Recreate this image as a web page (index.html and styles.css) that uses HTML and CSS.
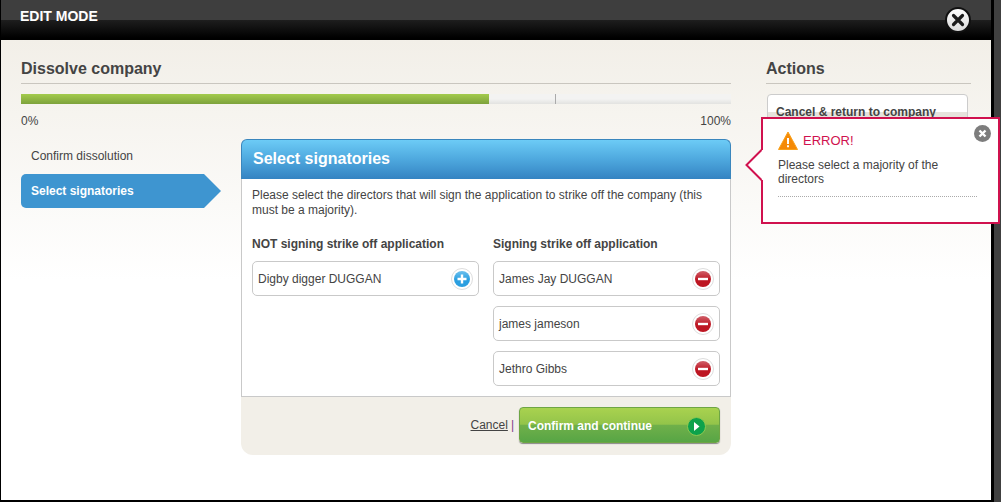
FILE: index.html
```html
<!DOCTYPE html>
<html lang="en">
<head>
    <meta charset="UTF-8">
    <meta name="viewport" content="width=device-width, initial-scale=1.0">
    <title>Dissolve company</title>
    <link rel="stylesheet" href="styles.css">
</head>
<body>
    <div class="modal">
        <div class="modal-bar">EDIT MODE</div>
        <div class="modal-body">
            <div class="main">
                <h2 class="section-title">Dissolve company</h2>
                <div class="progress">
                    <div class="progress-fill"></div>
                    <div class="progress-tick"></div>
                </div>
                <div class="progress-labels"><span>0%</span><span>100%</span></div>
                <div class="wizard">
                    <ul class="steps">
                        <li class="step">Confirm dissolution</li>
                        <li class="step step-active">Select signatories
                            <svg class="step-arrow" width="18" height="34" viewBox="0 0 18 34"><path d="M0 0H1L18 17 1 34H0Z" fill="#3e95d0"/></svg>
                        </li>
                    </ul>
                    <div class="panel">
                        <div class="panel-head">Select signatories</div>
                        <div class="panel-body">
                            <p class="intro">Please select the directors that will sign the application to strike off the company (this must be a majority).</p>
                            <div class="columns">
                                <div class="column">
                                    <h3 class="column-title">NOT signing strike off application</h3>
                                    <div class="person">Digby digger DUGGAN
                                        <svg class="round-icon" width="22" height="22" viewBox="0 0 22 22">
                                            <defs>
                                                <linearGradient id="blue-ball" x1="0" y1="0" x2="0" y2="1"><stop offset="0" stop-color="#6cc0ee"/><stop offset="0.55" stop-color="#2b9fe0"/></linearGradient>
                                                <linearGradient id="red-ball" x1="0" y1="0" x2="0" y2="1"><stop offset="0" stop-color="#d0606a"/><stop offset="0.55" stop-color="#bd1622"/></linearGradient>
                                            </defs>
                                            <circle cx="11" cy="11" r="10.5" fill="#fff" stroke="#ddd"/><circle cx="11" cy="11" r="8" fill="url(#blue-ball)"/><path d="M11 6.5v9M6.5 11h9" stroke="#fff" stroke-width="2.4"/>
                                        </svg>
                                    </div>
                                </div>
                                <div class="column">
                                    <h3 class="column-title">Signing strike off application</h3>
                                    <div class="person">James Jay DUGGAN
                                        <svg class="round-icon" width="22" height="22" viewBox="0 0 22 22"><circle cx="11" cy="11" r="10.5" fill="#fff" stroke="#ddd"/><circle cx="11" cy="11" r="8" fill="url(#red-ball)"/><path d="M6 11h10" stroke="#fff" stroke-width="2.4"/></svg>
                                    </div>
                                    <div class="person">james jameson
                                        <svg class="round-icon" width="22" height="22" viewBox="0 0 22 22"><circle cx="11" cy="11" r="10.5" fill="#fff" stroke="#ddd"/><circle cx="11" cy="11" r="8" fill="url(#red-ball)"/><path d="M6 11h10" stroke="#fff" stroke-width="2.4"/></svg>
                                    </div>
                                    <div class="person">Jethro Gibbs
                                        <svg class="round-icon" width="22" height="22" viewBox="0 0 22 22"><circle cx="11" cy="11" r="10.5" fill="#fff" stroke="#ddd"/><circle cx="11" cy="11" r="8" fill="url(#red-ball)"/><path d="M6 11h10" stroke="#fff" stroke-width="2.4"/></svg>
                                    </div>
                                </div>
                            </div>
                        </div>
                        <div class="panel-foot">
                            <a class="cancel" href="#">Cancel</a><span class="divider">|</span>
                            <button class="confirm">Confirm and continue
                                <svg width="19" height="19" viewBox="0 0 19 19"><circle cx="9.5" cy="9.5" r="9" fill="#0da24b" stroke="#8cc850"/><path d="M7 5l5.5 4.5L7 14Z" fill="#fff"/></svg>
                            </button>
                        </div>
                    </div>
                </div>
            </div>
            <div class="actions">
                <h2 class="section-title">Actions</h2>
                <div class="action-btn">Cancel &amp; return to company</div>
            </div>
        </div>
    </div>

    <svg class="modal-close" width="26" height="26" viewBox="0 0 26 26">
        <defs><linearGradient id="close-ball" x1="0" y1="0" x2="0" y2="1"><stop offset="0" stop-color="#fff"/><stop offset="1" stop-color="#d8d8d8"/></linearGradient></defs>
        <circle cx="13" cy="13" r="12" fill="url(#close-ball)" stroke="#111" stroke-width="2"/><path d="M8.5 8.5l9 9M17.5 8.5l-9 9" stroke="#1a1a1a" stroke-width="3.2" stroke-linecap="round"/>
    </svg>

    <div class="error-pop">
        <svg class="error-arrow" width="18" height="32" viewBox="0 0 18 32"><path d="M18 1H16.5L1.5 16 16.5 31H18Z" fill="#fff"/><path d="M16.5 1 1.5 16 16.5 31" fill="none" stroke="#d0114e" stroke-width="2"/></svg>
        <svg class="error-close" width="17" height="17" viewBox="0 0 17 17"><circle cx="8.5" cy="8.5" r="8.5" fill="#7d7d7d"/><path d="M5.5 5.5l6 6M11.5 5.5l-6 6" stroke="#fff" stroke-width="2.4"/></svg>
        <div class="error-title">
            <svg width="20" height="20" viewBox="0 0 20 20"><path d="M10 1 19.5 18.5H.5Z" fill="#f58a07" stroke="#f9a11b" stroke-linejoin="round"/><path d="M10 7v6" stroke="#fff" stroke-width="2"/><path d="M10 14.3v2" stroke="#fff" stroke-width="2"/></svg>
            <span class="error-label">ERROR!</span>
        </div>
        <p class="error-text">Please select a majority of the directors</p>
    </div>
</body>
</html>
```

FILE: styles.css
```css
html, body {
    height: 100%;
}
body {
    margin: 0;
    background-color: #404040;
    font-family: "Liberation Sans", Arial, sans-serif;
    font-size: 12px;
    color: #444;
    overflow: hidden;
}
.modal {
    width: 994px;
    height: 502px;
    box-sizing: border-box;
    border-left: 1px solid #000;
    border-right: 3px solid #000;
    border-bottom: 2px solid #000;
    display: flex;
    flex-direction: column;
}
.modal-bar {
    height: 40px;
    flex: none;
    box-sizing: border-box;
    padding: 8px 0 0 19px;
    background: linear-gradient(#3e3e3e 0, #3e3e3e 20px, #1e1e1e 20px, #000 38px);
    color: #fff;
    font-size: 14px;
    font-weight: bold;
}
.modal-body {
    flex: 1;
    display: flex;
    padding: 19px 20px 0 20px;
    background: linear-gradient(#f2efe8, #fff 240px);
}
.main {
    width: 710px;
}
.actions {
    width: 205px;
    margin-left: 35px;
}
.section-title {
    margin: 0;
    height: 24px;
    line-height: 19px;
    font-size: 16px;
    color: #444;
    border-bottom: 1px solid #c9c6bf;
}
.progress {
    position: relative;
    height: 10px;
    margin-top: 10px;
    background: linear-gradient(#f3f3f2, #f3f3f2 50%, #e2e2e0);
}
.progress-fill {
    width: 468px;
    height: 100%;
    background: linear-gradient(#a3cb4c, #7da23c);
}
.progress-tick {
    position: absolute;
    left: 534px;
    top: 0;
    width: 1px;
    height: 100%;
    background: #aaa;
}
.progress-labels {
    display: flex;
    justify-content: space-between;
    margin-top: 10px;
    line-height: 14px;
}
.wizard {
    display: flex;
    margin-top: 11px;
}
.steps {
    list-style: none;
    margin: 0;
    padding: 0;
    width: 220px;
    flex: none;
}
.step {
    height: 35px;
    line-height: 35px;
    padding-left: 10px;
    width: 182px;
    box-sizing: border-box;
}
.step-active {
    position: relative;
    height: 34px;
    background: #3e95d0;
    color: #fff;
    font-weight: bold;
    border-radius: 5px 0 0 5px;
    line-height: 34px;
}
.step-arrow {
    position: absolute;
    left: 182px;
    top: 0;
}
.panel {
    flex: 1;
    display: flex;
    flex-direction: column;
}
.panel-head {
    height: 40px;
    box-sizing: border-box;
    padding-left: 11px;
    line-height: 38px;
    font-size: 16px;
    font-weight: bold;
    color: #fff;
    border: 1px solid #3a86bd;
    border-bottom: none;
    border-radius: 6px 6px 0 0;
    background: linear-gradient(#6ccbf6, #4ea8de 50%, #3483c2);
}
.panel-body {
    height: 218px;
    box-sizing: border-box;
    padding: 9px 10px 0 10px;
    background: #fff;
    border: 1px solid #c9c9c9;
    border-top: none;
}
.intro {
    margin: 0;
    line-height: 15px;
}
.columns {
    display: grid;
    grid-template-columns: 227px 227px;
    column-gap: 14px;
    margin-top: 19px;
}
.column-title {
    margin: 0 0 10px;
    font-size: 12px;
    line-height: 14px;
    color: #444;
}
.person {
    display: flex;
    align-items: center;
    justify-content: space-between;
    height: 35px;
    box-sizing: border-box;
    margin-bottom: 10px;
    padding: 0 5px;
    background: #fff;
    border: 1px solid #c9c9c9;
    border-radius: 5px;
}
.panel-foot {
    height: 58px;
    box-sizing: border-box;
    display: flex;
    align-items: flex-start;
    justify-content: flex-end;
    padding: 10px 11px 0 0;
    background: #f2efe8;
    border-radius: 0 0 12px 12px;
}
.cancel {
    color: #444;
    line-height: 36px;
}
.divider {
    color: #7c3c8c;
    line-height: 36px;
    margin: 0 5px 0 3px;
}
.confirm {
    display: flex;
    align-items: center;
    justify-content: space-between;
    width: 201px;
    height: 36px;
    padding: 2px 13px 0 8px;
    border: 1px solid #6ea544;
    border-radius: 4px;
    box-shadow: 0 1px 1px #888;
    background: linear-gradient(#a9d24f, #93c44a 48%, #70b04a 50%, #57a545);
    color: #fff;
    font-family: inherit;
    font-size: 12px;
    font-weight: bold;
    cursor: pointer;
}
.action-btn {
    width: 201px;
    height: 40px;
    box-sizing: border-box;
    margin: 10px 0 0 1px;
    padding: 10px 8px;
    border: 1px solid #ccc;
    border-radius: 4px;
    font-weight: bold;
    background: linear-gradient(#fff, #fff 17px, #e6e3dc 17px);
}
.modal-close {
    position: absolute;
    left: 945px;
    top: 7px;
}
.error-pop {
    position: absolute;
    left: 761px;
    top: 117px;
    width: 239px;
    height: 107px;
    box-sizing: border-box;
    padding: 12px 21px 0 15px;
    background: #fff;
    border: 2px solid #d0114e;
}
.error-arrow {
    position: absolute;
    left: -18px;
    top: 30px;
}
.error-close {
    position: absolute;
    right: 7px;
    top: 6px;
}
.error-title {
    display: flex;
    align-items: center;
    gap: 5px;
    font-size: 13px;
    color: #d0114e;
}
.error-label {
    margin-top: -2px;
}
.error-text {
    margin: 7px 0 0;
    padding-bottom: 10px;
    line-height: 14px;
    border-bottom: 1px dotted #aaa;
}
```
